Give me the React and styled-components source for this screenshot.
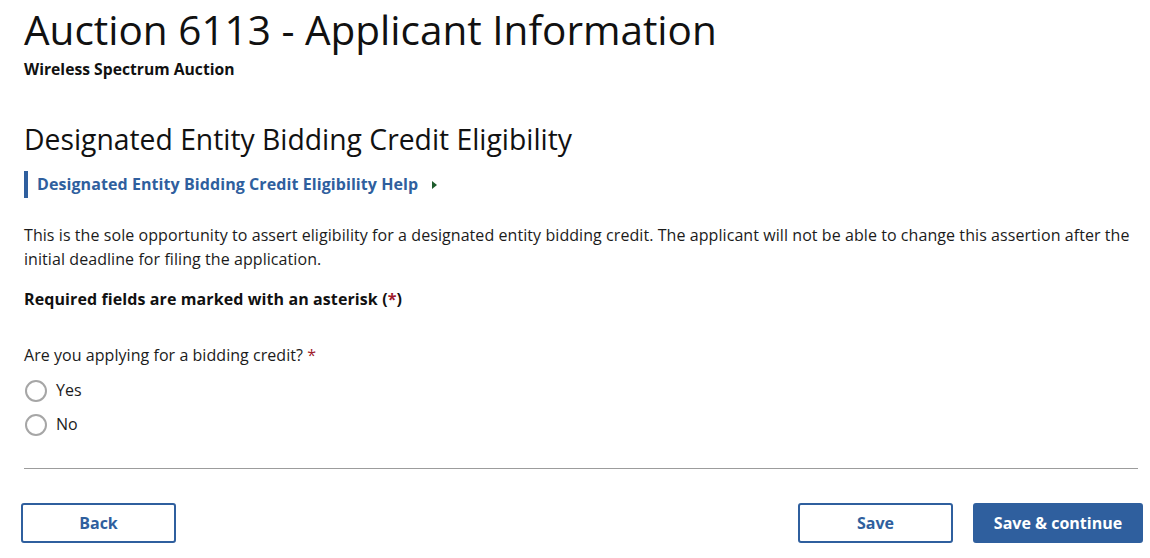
import React, { useState } from "react";
import styled, { createGlobalStyle } from "styled-components";

const GlobalStyle = createGlobalStyle`
  html, body {
    margin: 0;
    padding: 0;
    background: #ffffff;
  }
  body {
    font-family: "Open Sans", "Noto Sans", Arial, sans-serif;
    color: #1b1b1b;
  }
`;

const Page = styled.main`
  padding: 6px 12px 0 24px;
`;

const Title = styled.h1`
  margin: 0;
  font-size: 40.5px;
  font-weight: 400;
  line-height: 48px;
  color: #111;
`;

const Subtitle = styled.div`
  margin-top: 4px;
  font-size: 15.7px;
  font-weight: 700;
  line-height: 22px;
  color: #111;
`;

const SectionTitle = styled.h2`
  margin: 39px 0 0;
  font-size: 28.3px;
  font-weight: 400;
  line-height: 40px;
  color: #111;
`;

const HelpToggle = styled.button`
  display: flex;
  align-items: center;
  gap: 14px;
  margin-top: 12px;
  padding: 2px 0 2px 9px;
  border: none;
  border-left: 4px solid #2f5f9e;
  background: none;
  font-family: inherit;
  font-size: 16px;
  font-weight: 700;
  line-height: 23px;
  letter-spacing: 0.08px;
  color: #2f5f9e;
  cursor: pointer;
`;

const Caret = styled.span`
  width: 0;
  height: 0;
  border-top: 4px solid transparent;
  border-bottom: 4px solid transparent;
  border-left: 5px solid #1e5c2c;
`;

const Paragraph = styled.p`
  margin: 25px 0 0;
  font-size: 16px;
  line-height: 24px;
  letter-spacing: 0.07px;
  color: #1b1b1b;
`;

const RequiredNote = styled.p`
  margin: 16px 0 0;
  font-size: 16px;
  font-weight: 700;
  line-height: 24px;
  letter-spacing: 0.1px;
  color: #111;
`;

const Star = styled.span`
  color: #a01b2c;
`;

const Fieldset = styled.fieldset`
  margin: 32px 0 0;
  padding: 0;
  border: none;
`;

const Legend = styled.legend`
  padding: 0;
  font-size: 16px;
  line-height: 24px;
  letter-spacing: 0.05px;
  color: #1b1b1b;
`;

const OptionList = styled.div`
  display: flex;
  flex-direction: column;
  gap: 11px;
  margin-top: 12px;
`;

const Option = styled.label`
  display: flex;
  align-items: center;
  gap: 9px;
  font-size: 16px;
  line-height: 23px;
  cursor: pointer;
`;

const Radio = styled.input.attrs({ type: "radio" })`
  appearance: none;
  margin: 0 0 0 1px;
  width: 22px;
  height: 22px;
  border: 2px solid #a6a6a6;
  border-radius: 50%;
  background: #fff;
  cursor: pointer;
  &:checked {
    box-shadow: inset 0 0 0 4px #fff;
    background: #2f5f9e;
    border-color: #2f5f9e;
  }
`;

const Divider = styled.hr`
  margin: 32px 0 0;
  border: none;
  border-top: 1px solid #9c9c9c;
`;

const Actions = styled.div`
  display: flex;
  align-items: center;
  margin: 34px -5px 0 -3px;
`;

const RightActions = styled.div`
  display: flex;
  gap: 20px;
  margin-left: auto;
`;

const Button = styled.button`
  height: 40px;
  width: ${(p) => p.$width}px;
  border: 2px solid #2f5f9e;
  border-radius: 3px;
  background: ${(p) => (p.$primary ? "#2f5f9e" : "#fff")};
  color: ${(p) => (p.$primary ? "#fff" : "#2f5f9e")};
  font-family: inherit;
  font-size: 16px;
  font-weight: 700;
  cursor: pointer;
`;

export default function App() {
  const [answer, setAnswer] = useState(null);
  return (
    <>
      <GlobalStyle />
      <Page>
        <Title>Auction 6113 - Applicant Information</Title>
        <Subtitle>Wireless Spectrum Auction</Subtitle>
        <SectionTitle>Designated Entity Bidding Credit Eligibility</SectionTitle>
        <HelpToggle type="button">
          Designated Entity Bidding Credit Eligibility Help
          <Caret />
        </HelpToggle>
        <Paragraph>
          This is the sole opportunity to assert eligibility for a designated entity bidding credit. The
          applicant will not be able to change this assertion after the initial deadline for filing the
          application.
        </Paragraph>
        <RequiredNote>
          Required fields are marked with an asterisk (<Star>*</Star>)
        </RequiredNote>
        <Fieldset>
          <Legend>
            Are you applying for a bidding credit? <Star>*</Star>
          </Legend>
          <OptionList>
            <Option>
              <Radio name="credit" checked={answer === "yes"} onChange={() => setAnswer("yes")} />
              Yes
            </Option>
            <Option>
              <Radio name="credit" checked={answer === "no"} onChange={() => setAnswer("no")} />
              No
            </Option>
          </OptionList>
        </Fieldset>
        <Divider />
        <Actions>
          <Button $width={155}>Back</Button>
          <RightActions>
            <Button $width={155}>Save</Button>
            <Button $width={170} $primary>
              Save &amp; continue
            </Button>
          </RightActions>
        </Actions>
      </Page>
    </>
  );
}
